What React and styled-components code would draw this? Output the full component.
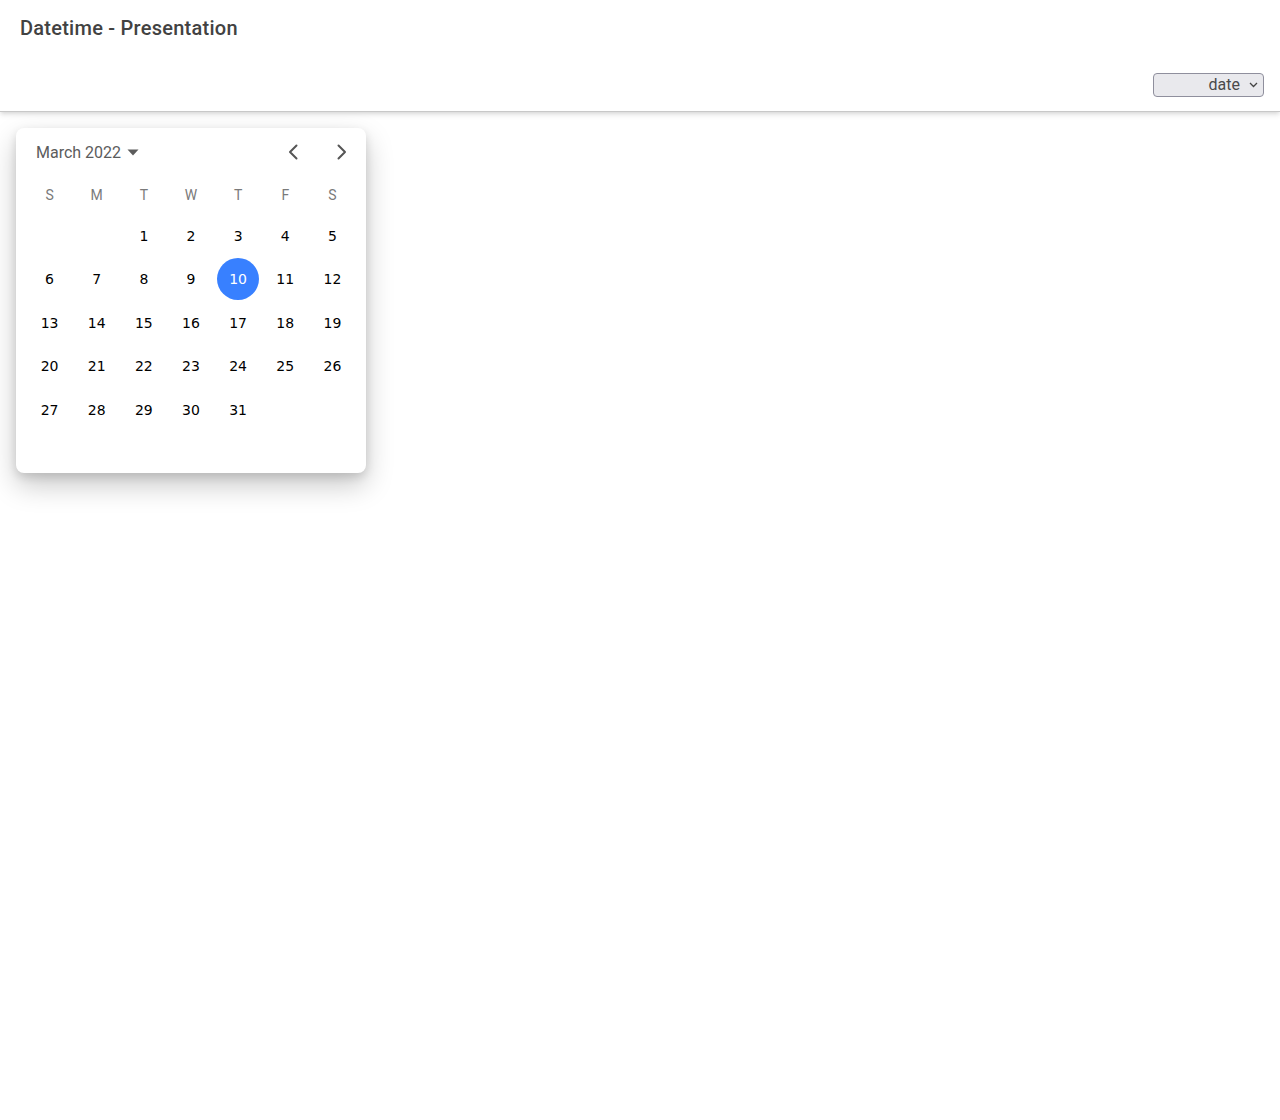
import React from "react";
import styled, { createGlobalStyle } from "styled-components";

const weekdays = ["S", "M", "T", "W", "T", "F", "S"];
const firstWeekday = 2;
const daysInMonth = 31;
const selectedDay = 10;

const GlobalStyle = createGlobalStyle`
  html, body {
    margin: 0;
    padding: 0;
    background: #fff;
    font-family: Roboto, "Liberation Sans", sans-serif;
  }
`;

const Page = styled.div`
  min-height: 1120px;
  background: #fff;
`;

const Header = styled.header`
  position: relative;
  background: #fff;
  border-bottom: 1px solid #c8c8c8;
  box-shadow: 0 2px 4px -1px rgba(0, 0, 0, 0.12), 0 4px 5px 0 rgba(0, 0, 0, 0.06);
`;

const Toolbar = styled.div`
  height: ${(p) => (p.$end ? "55px" : "56px")};
  display: flex;
  align-items: center;
  justify-content: ${(p) => (p.$end ? "flex-end" : "flex-start")};
  padding: 0 16px 0 20px;
`;

const Title = styled.h1`
  margin: 0;
  font-size: 20px;
  font-weight: 500;
  color: #424242;
  letter-spacing: 0.25px;
`;

const Select = styled.div`
  width: 104px;
  height: 22px;
  display: flex;
  align-items: center;
  justify-content: flex-end;
  gap: 9px;
  padding-right: 5px;
  box-sizing: content-box;
  background: #e9e9ed;
  border: 1px solid #8f8f9d;
  border-radius: 4px;
  font-size: 16px;
  color: #4a4a4a;
  margin-top: 2px;
`;

const Content = styled.main`
  padding: 16px;
`;

const Card = styled.div`
  width: 350px;
  background: #fff;
  border-radius: 8px;
  padding-bottom: 41px;
  box-shadow: 0 12px 28px rgba(0, 0, 0, 0.22), 0 4px 10px rgba(0, 0, 0, 0.12);
`;

const CalHeader = styled.div`
  height: 48px;
  display: flex;
  align-items: center;
  justify-content: space-between;
  padding: 0 9px 0 20px;
`;

const MonthLabel = styled.div`
  display: flex;
  align-items: center;
  gap: 6px;
  font-size: 16px;
  color: #5c5c5c;
`;

const NavButtons = styled.div`
  display: flex;
  gap: 15px;
`;

const NavButton = styled.button`
  width: 32px;
  height: 32px;
  display: flex;
  align-items: center;
  justify-content: center;
  border: none;
  background: transparent;
  padding: 0;
  cursor: pointer;
`;

const Grid = styled.div`
  display: grid;
  grid-template-columns: repeat(7, 1fr);
  padding: 0 10px;
`;

const Weekday = styled.div`
  height: 38px;
  display: flex;
  align-items: center;
  justify-content: center;
  font-size: 14px;
  color: #7a7a7a;
`;

const Day = styled.div`
  height: 43.5px;
  display: flex;
  align-items: center;
  justify-content: center;
`;

const DayNumber = styled.span`
  width: 42px;
  height: 42px;
  border-radius: 50%;
  display: flex;
  align-items: center;
  justify-content: center;
  font-family: "DejaVu Sans", sans-serif;
  font-size: 14px;
  color: ${(p) => (p.$active ? "#fff" : "#000")};
  background: ${(p) => (p.$active ? "#3880ff" : "transparent")};
`;

const Chevron = ({ dir }) => (
  <svg width="20" height="20" viewBox="0 0 20 20" fill="none">
    <path
      d={dir === "left" ? "M12.5 3.5 L6 10 L12.5 16.5" : "M7.5 3.5 L14 10 L7.5 16.5"}
      stroke="#555"
      strokeWidth="2"
      strokeLinecap="round"
      strokeLinejoin="round"
    />
  </svg>
);

const App = () => {
  const cells = [];
  for (let i = 0; i < firstWeekday; i++) cells.push(null);
  for (let d = 1; d <= daysInMonth; d++) cells.push(d);

  return (
    <Page>
      <GlobalStyle />
      <Header>
        <Toolbar>
          <Title>Datetime - Presentation</Title>
        </Toolbar>
        <Toolbar $end>
          <Select>
            date
            <svg width="9" height="6" viewBox="0 0 9 6">
              <path d="M1 1 L4.5 4.5 L8 1" stroke="#444" strokeWidth="1.3" fill="none" />
            </svg>
          </Select>
        </Toolbar>
      </Header>
      <Content>
        <Card>
          <CalHeader>
            <MonthLabel>
              March 2022
              <svg width="12" height="7" viewBox="0 0 12 7">
                <path d="M0.5 0.5 L11.5 0.5 L6 6.5 Z" fill="#5c5c5c" />
              </svg>
            </MonthLabel>
            <NavButtons>
              <NavButton>
                <Chevron dir="left" />
              </NavButton>
              <NavButton>
                <Chevron dir="right" />
              </NavButton>
            </NavButtons>
          </CalHeader>
          <Grid>
            {weekdays.map((w, i) => (
              <Weekday key={i}>{w}</Weekday>
            ))}
            {cells.map((d, i) => (
              <Day key={i}>
                {d && <DayNumber $active={d === selectedDay}>{d}</DayNumber>}
              </Day>
            ))}
          </Grid>
        </Card>
      </Content>
    </Page>
  );
};

export default App;
